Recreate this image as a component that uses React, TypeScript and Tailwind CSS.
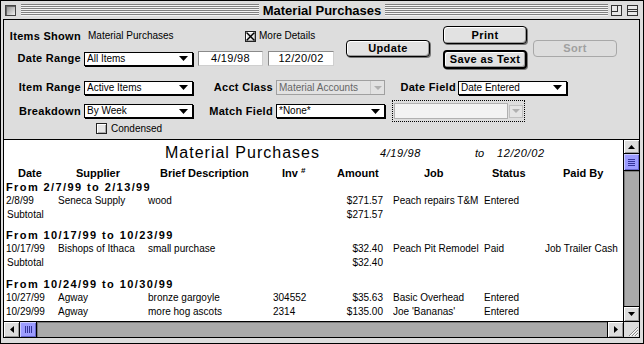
import React from "react";

type Dir = "up" | "down" | "left" | "right";

function Tri({ dir = "down", color = "#000", w = 8, h = 4 }: { dir?: Dir; color?: string; w?: number; h?: number }) {
  const horiz = dir === "left" || dir === "right";
  const W = horiz ? h : w;
  const H = horiz ? w : h;
  let pts = "";
  if (dir === "down") pts = `0,0 ${w},0 ${w / 2},${h}`;
  if (dir === "up") pts = `${w / 2},0 ${w},${h} 0,${h}`;
  if (dir === "right") pts = `0,0 ${h},${w / 2} 0,${w}`;
  if (dir === "left") pts = `${h},0 0,${w / 2} ${h},${w}`;
  return (
    <svg width={W} height={H} viewBox={`0 0 ${W} ${H}`} className="block shrink-0">
      <polygon points={pts} fill={color} />
    </svg>
  );
}

function Stripes() {
  return (
    <div className="flex flex-col h-[12px] flex-1">
      {[0, 1, 2, 3, 4, 5].map((i) => (
        <React.Fragment key={i}>
          <div className="h-[1px] bg-[#808080]" />
          <div className="h-[1px] bg-[#f4f4f4]" />
        </React.Fragment>
      ))}
    </div>
  );
}

function Label({ text, w }: { text: string; w: string }) {
  return <span className={`${w} shrink-0 text-right text-[11px] font-bold tracking-[0.3px] leading-none`}>{text}</span>;
}

function Popup({ text, w, className = "" }: { text: string; w: string; className?: string }) {
  return (
    <div className={`${w} ${className} h-[14px] shrink-0 border border-black bg-white shadow-[1px_1px_0_#000] flex items-center pl-[2px] pr-[4px]`}>
      <span className="flex-1 text-[10px] leading-none whitespace-nowrap overflow-hidden">{text}</span>
      <Tri w={9} h={5} />
    </div>
  );
}

function DisabledPopup({ text, w, className = "" }: { text: string; w: string; className?: string }) {
  return (
    <div className={`${w} ${className} h-[15px] shrink-0 border border-[#a0a0a0] bg-[#e2e2e2] flex items-center pl-[2px]`}>
      <span className="flex-1 text-[10px] leading-none whitespace-nowrap overflow-hidden text-[#666666]">{text}</span>
      <div className="w-[14px] h-[13px] flex items-center justify-center border-l border-[#c8c8c8]">
        <Tri w={8} h={4} color="#b0b0b0" />
      </div>
    </div>
  );
}

function TextField({ text, w, className = "" }: { text: string; w: string; className?: string }) {
  return (
    <div className={`${w} ${className} h-[15px] shrink-0 border border-[#8a8a8a] border-r-[#cfcfcf] border-b-[#cfcfcf] bg-white flex items-center justify-center text-[11px] leading-none tracking-[0.3px]`}>
      {text}
    </div>
  );
}

function CheckBox({ checked }: { checked?: boolean }) {
  return (
    <div className="w-[11px] h-[11px] shrink-0 border border-[#222] bg-[#e6e6e6] shadow-[inset_1px_1px_0_#fff,inset_-1px_-1px_0_#aaa] flex items-center justify-center">
      {checked && (
        <svg width="9" height="9" viewBox="0 0 9 9" className="block">
          <line x1="0.5" y1="0.5" x2="8.5" y2="8.5" stroke="#000" strokeWidth="1.4" />
          <line x1="8.5" y1="0.5" x2="0.5" y2="8.5" stroke="#000" strokeWidth="1.4" />
        </svg>
      )}
    </div>
  );
}

function Button({ text, w, h, thick, disabled, className = "" }: { text: string; w: string; h: string; thick?: boolean; disabled?: boolean; className?: string }) {
  const base = disabled
    ? "border border-[#a8a8a8] text-[#a0a0a0] bg-[#dddddd]"
    : thick
    ? "border-2 border-black bg-[#e2e2e2] shadow-[inset_1px_1px_0_#fff,inset_-1px_-1px_0_#999,1px_1px_0_#777]"
    : "border border-black bg-[#e2e2e2] shadow-[inset_1px_1px_0_#fff,inset_-1px_-1px_0_#999,1px_1px_0_#777]";
  return (
    <div className={`${w} ${h} ${base} ${className} shrink-0 rounded-[4px] flex items-center justify-center text-[11px] font-bold tracking-[0.4px] leading-none`}>
      {text}
    </div>
  );
}

function ArrowBox({ dir, className = "" }: { dir: Dir; className?: string }) {
  return (
    <div className={`${className} bg-[#dddddd] shadow-[inset_1px_1px_0_#fff,inset_-1px_-1px_0_#999] flex items-center justify-center shrink-0`}>
      <Tri dir={dir} w={7} h={4} />
    </div>
  );
}

const cols = {
  date: "w-[54px] pl-[2px]",
  sup: "w-[90px]",
  desc: "w-[125px]",
  inv: "w-[67px]",
  amt: "w-[43px] text-right",
  job: "w-[91px] ml-[10px] overflow-hidden whitespace-nowrap",
  status: "w-[61px]",
  paid: "whitespace-nowrap",
};

function DataRow({ d }: { d: string[] }) {
  return (
    <div className="h-[14px] flex items-center text-[10px] leading-none whitespace-nowrap">
      <span className={`${cols.date} shrink-0`}>{d[0]}</span>
      <span className={`${cols.sup} shrink-0`}>{d[1]}</span>
      <span className={`${cols.desc} shrink-0`}>{d[2]}</span>
      <span className={`${cols.inv} shrink-0`}>{d[3]}</span>
      <span className={`${cols.amt} shrink-0`}>{d[4]}</span>
      <span className={`${cols.job} shrink-0`}>{d[5]}</span>
      <span className={`${cols.status} shrink-0`}>{d[6]}</span>
      <span className={`${cols.paid} shrink-0`}>{d[7]}</span>
    </div>
  );
}

function Heading({ text }: { text: string }) {
  return (
    <div className="h-[14px] flex items-center pl-[2px] text-[11px] font-bold tracking-[1.4px] leading-none whitespace-nowrap">{text}</div>
  );
}

function Subtotal({ amt }: { amt: string }) {
  return (
    <div className="h-[14px] flex items-center text-[10px] leading-none">
      <span className="w-[336px] pl-[3px] shrink-0">Subtotal</span>
      <span className="w-[43px] text-right shrink-0">{amt}</span>
    </div>
  );
}

export default function App() {
  return (
    <div className="w-[644px] h-[344px] bg-[#dddddd] border border-black flex flex-col font-['Liberation_Sans',Arial,sans-serif] text-black overflow-hidden">
      {/* Title bar */}
      <div className="h-[18px] shrink-0 grid grid-cols-[1fr_auto_1fr] items-center">
        <div className="flex items-center pl-[4px]">
          <div className="w-[11px] h-[11px] border border-[#444] bg-[linear-gradient(135deg,#8a8a8a,#f0f0f0)] shadow-[inset_1px_1px_0_#666] shrink-0" />
          <div className="ml-[5px] flex-1 flex">
            <Stripes />
          </div>
        </div>
        <div className="px-[4px] text-[13px] font-bold leading-none">Material Purchases</div>
        <div className="flex items-center pr-[5px]">
          <div className="flex-1 flex mr-[3px]">
            <Stripes />
          </div>
          <div className="w-[11px] h-[11px] border border-[#333] bg-[#e8e8e8] relative shrink-0">
            <div className="w-[6px] h-[6px] border-r border-b border-[#333]" />
          </div>
          <div className="ml-[5px] w-[11px] h-[11px] border border-[#333] bg-[#e8e8e8] flex flex-col justify-center shrink-0">
            <div className="h-[3px] border-t border-b border-[#333]" />
          </div>
        </div>
      </div>

      {/* Window content */}
      <div className="flex-1 ml-[2px] mr-[3px] mb-[5px] border border-black flex flex-col bg-white min-h-0">
        {/* Control panel */}
        <div className="h-[120px] shrink-0 border-b border-black bg-[#dddddd] flex flex-col">
          {/* Block 1 */}
          <div className="mt-[6px] h-[44px] flex">
            <div className="w-[329px] flex flex-col shrink-0">
              <div className="mt-[3px] h-[14px] flex items-center">
                <Label text="Items Shown" w="w-[77px]" />
                <span className="ml-[7px] w-[157px] shrink-0 text-[10px] leading-none">Material Purchases</span>
                <CheckBox checked />
                <span className="ml-[3px] text-[10px] leading-none">More Details</span>
              </div>
              <div className="mt-[8px] h-[15px] flex items-center">
                <Label text="Date Range" w="w-[77px]" />
                <Popup text="All Items" w="w-[109px]" className="ml-[3px]" />
                <TextField text="4/19/98" w="w-[65px]" className="ml-[5px]" />
                <TextField text="12/20/02" w="w-[66px]" className="ml-[5px]" />
              </div>
            </div>
            <Button text="Update" w="w-[84px]" h="h-[17px]" className="ml-[13px] mt-[14px]" />
            <div className="ml-[13px] flex flex-col">
              <Button text="Print" w="w-[84px]" h="h-[18px]" />
              <Button text="Save as Text" w="w-[84px]" h="h-[19px]" thick className="mt-[6px]" />
            </div>
            <Button text="Sort" w="w-[84px]" h="h-[17px]" disabled className="ml-[6px] mt-[14px]" />
          </div>

          {/* Row 3 */}
          <div className="mt-[10px] h-[15px] flex items-center">
            <Label text="Item Range" w="w-[77px]" />
            <Popup text="Active Items" w="w-[109px]" className="ml-[3px]" />
            <Label text="Acct Class" w="w-[80px]" />
            <DisabledPopup text="Material Accounts" w="w-[109px]" className="ml-[3px]" />
            <Label text="Date Field" w="w-[71px]" />
            <Popup text="Date Entered" w="w-[109px]" className="ml-[2px]" />
          </div>

          {/* Row 4 */}
          <div className="mt-[5px] h-[22px] flex items-center">
            <Label text="Breakdown" w="w-[77px]" />
            <Popup text="By Week" w="w-[109px]" className="ml-[3px]" />
            <Label text="Match Field" w="w-[80px]" />
            <Popup text="*None*" w="w-[109px]" className="ml-[3px]" />
            <div className="ml-[7px] w-[133px] h-[22px] border border-dotted border-black flex items-center pl-[1px]">
              <div className="w-[114px] h-[16px] border border-[#b0b0b0] bg-[#f2f2f2]" />
              <div className="ml-[1px] w-[14px] h-[13px] border border-[#c0c0c0] bg-[#e4e4e4] flex items-center justify-center">
                <Tri w={8} h={4} color="#b0b0b0" />
              </div>
            </div>
          </div>

          {/* Row 5 */}
          <div className="mt-[1px] h-[11px] flex items-center pl-[92px]">
            <CheckBox />
            <span className="ml-[4px] text-[10px] leading-none">Condensed</span>
          </div>
        </div>

        {/* Report + scrollbars */}
        <div className="flex-1 flex min-h-0">
          <div className="flex-1 bg-white overflow-hidden flex flex-col">
            <div className="mt-[3px] h-[20px] flex items-center whitespace-nowrap">
              <span className="ml-[161px] w-[215px] shrink-0 text-[16px] tracking-[1px] leading-none">Material Purchases</span>
              <span className="w-[95px] shrink-0 text-[11px] italic tracking-[0.6px] leading-none">4/19/98</span>
              <span className="w-[22px] shrink-0 text-[11px] italic leading-none">to</span>
              <span className="shrink-0 text-[11px] italic tracking-[0.6px] leading-none">12/20/02</span>
            </div>
            <div className="mt-[3px] h-[14px] flex items-center text-[11px] font-bold leading-none whitespace-nowrap pl-[14px]">
              <span className="w-[58px] shrink-0">Date</span>
              <span className="w-[84px] shrink-0">Supplier</span>
              <span className="w-[122px] shrink-0">Brief Description</span>
              <span className="w-[55px] shrink-0">
                Inv <sup className="text-[8px]">#</sup>
              </span>
              <span className="w-[87px] shrink-0">Amount</span>
              <span className="w-[68px] shrink-0">Job</span>
              <span className="w-[71px] shrink-0">Status</span>
              <span className="shrink-0">Paid By</span>
            </div>
            <Heading text="From 2/7/99 to 2/13/99" />
            <DataRow d={["2/8/99", "Seneca Supply", "wood", "", "$271.57", "Peach repairs T&M", "Entered", ""]} />
            <Subtotal amt="$271.57" />
            <div className="h-[6px] shrink-0" />
            <Heading text="From 10/17/99 to 10/23/99" />
            <DataRow d={["10/17/99", "Bishops of Ithaca", "small purchase", "", "$32.40", "Peach Pit Remodel", "Paid", "Job Trailer Cash"]} />
            <Subtotal amt="$32.40" />
            <div className="h-[7px] shrink-0" />
            <Heading text="From 10/24/99 to 10/30/99" />
            <DataRow d={["10/27/99", "Agway", "bronze gargoyle", "304552", "$35.63", "Basic Overhead", "Entered", ""]} />
            <DataRow d={["10/29/99", "Agway", "more hog ascots", "2314", "$135.00", "Joe 'Bananas'", "Entered", ""]} />
          </div>
          {/* Vertical scrollbar */}
          <div className="w-[16px] shrink-0 border-l border-black flex flex-col">
            <ArrowBox dir="up" className="h-[14px] border-b border-black" />
            <div className="h-[17px] shrink-0 border-b border-black bg-[#9c9cff] shadow-[inset_1px_1px_0_#ccccff,inset_-1px_-1px_0_#6666cc] flex flex-col items-center justify-center gap-[1px]">
              {[0, 1, 2, 3].map((i) => (
                <div key={i} className="w-[7px] h-[1px] bg-[#333399]" />
              ))}
            </div>
            <div className="flex-1 bg-[#aaaaaa] shadow-[inset_1px_1px_0_#7a7a7a]" />
            <ArrowBox dir="down" className="h-[15px] border-t border-black" />
          </div>
        </div>

        {/* Horizontal scrollbar */}
        <div className="h-[16px] shrink-0 border-t border-black flex">
          <ArrowBox dir="left" className="w-[16px] border-r border-black" />
          <div className="w-[17px] shrink-0 border-r border-black bg-[#9c9cff] shadow-[inset_1px_1px_0_#ccccff,inset_-1px_-1px_0_#6666cc] flex items-center justify-center gap-[1px]">
            {[0, 1, 2, 3].map((i) => (
              <div key={i} className="w-[1px] h-[7px] bg-[#333399]" />
            ))}
          </div>
          <div className="flex-1 bg-[#aaaaaa] shadow-[inset_1px_1px_0_#7a7a7a]" />
          <ArrowBox dir="right" className="w-[16px] border-l border-black" />
          <div className="w-[16px] shrink-0 border-l border-black bg-[#dddddd] flex items-end justify-end">
            <svg width="15" height="15" viewBox="0 0 15 15" className="block">
              <line x1="5" y1="14" x2="14" y2="5" stroke="#888" strokeWidth="1" />
              <line x1="6" y1="14" x2="14" y2="6" stroke="#fff" strokeWidth="1" />
              <line x1="8" y1="14" x2="14" y2="8" stroke="#888" strokeWidth="1" />
              <line x1="9" y1="14" x2="14" y2="9" stroke="#fff" strokeWidth="1" />
              <line x1="11" y1="14" x2="14" y2="11" stroke="#888" strokeWidth="1" />
              <line x1="12" y1="14" x2="14" y2="12" stroke="#fff" strokeWidth="1" />
            </svg>
          </div>
        </div>
      </div>
    </div>
  );
}
